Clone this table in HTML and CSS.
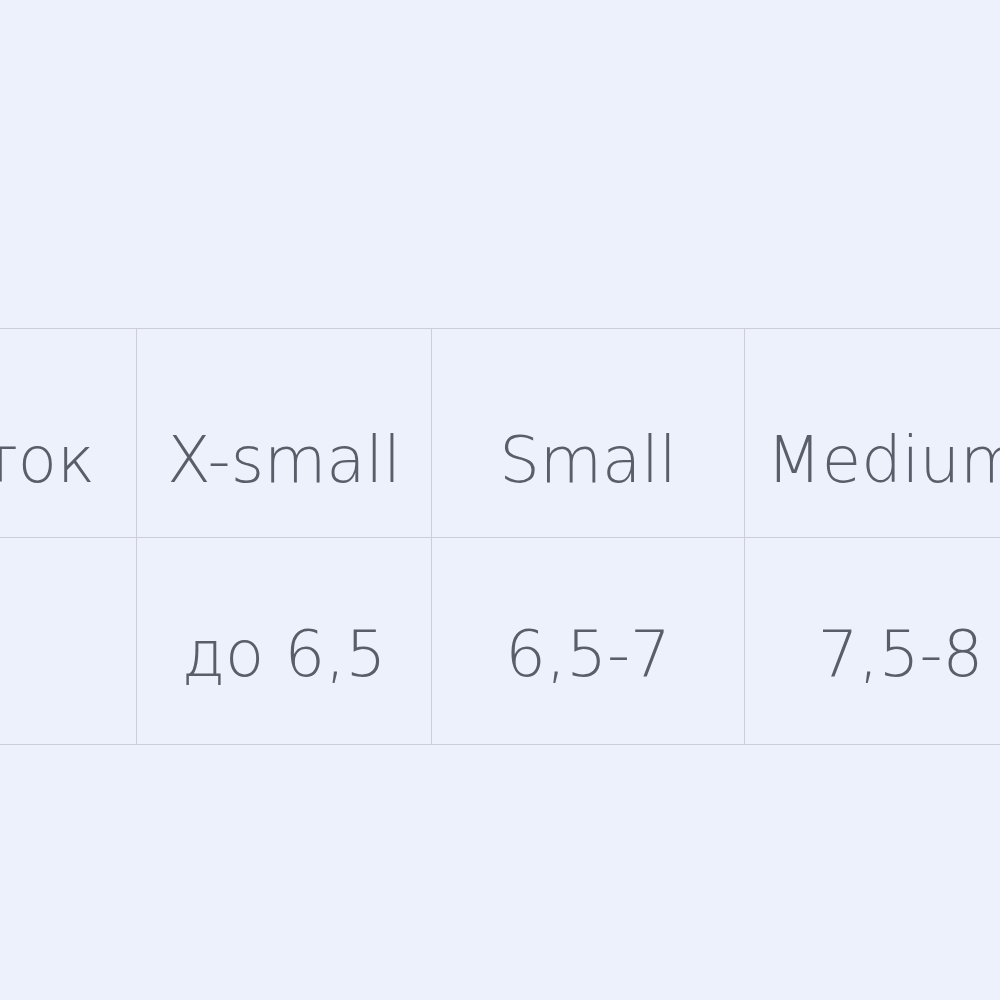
FILE: index.html
```html
<!DOCTYPE html>
<html lang="ru">
<head>
<meta charset="utf-8">
<link rel="stylesheet" href="styles.css">
</head>
<body>
<div class="wrap">
  <table class="sizes">
    <colgroup>
      <col class="c1"><col class="c2"><col class="c3"><col class="c4">
    </colgroup>
    <tr class="head">
      <td class="first">Размер перчаток</td>
      <td>X-small</td>
      <td>Small</td>
      <td>Medium</td>
    </tr>
    <tr class="body">
      <td class="first"></td>
      <td>до 6,5</td>
      <td>6,5-7</td>
      <td class="last">7,5-8</td>
    </tr>
  </table>
</div>
</body>
</html>
```
FILE: styles.css
```css
html, body {
  margin: 0;
  padding: 0;
  background: #edf1fc;
}
body {
  width: 1000px;
  height: 1000px;
  overflow: hidden;
  font-family: "DejaVu Sans", sans-serif;
  font-weight: 200;
  color: #5a5e6a;
}
.wrap {
  padding-top: 328px;
  margin-left: -664px;
}
.sizes {
  border-collapse: collapse;
  table-layout: fixed;
  width: 1708px;
}
.c1 { width: 800px; }
.c2 { width: 295px; }
.c3 { width: 313px; }
.c4 { width: 300px; }
.sizes td {
  border: 1px solid #cbced8;
  text-align: center;
  vertical-align: top;
  font-size: 64px;
  line-height: 64px;
  white-space: nowrap;
  padding: 0;
}
.head td {
  height: 209px;
  padding-top: 99px;
  box-sizing: border-box;
}
.body td {
  height: 207px;
  padding-top: 84px;
  box-sizing: border-box;
}
.sizes td.first {
  text-align: right;
  padding-right: 41px;
}
.sizes td.last {
  padding-left: 12px;
}
```
